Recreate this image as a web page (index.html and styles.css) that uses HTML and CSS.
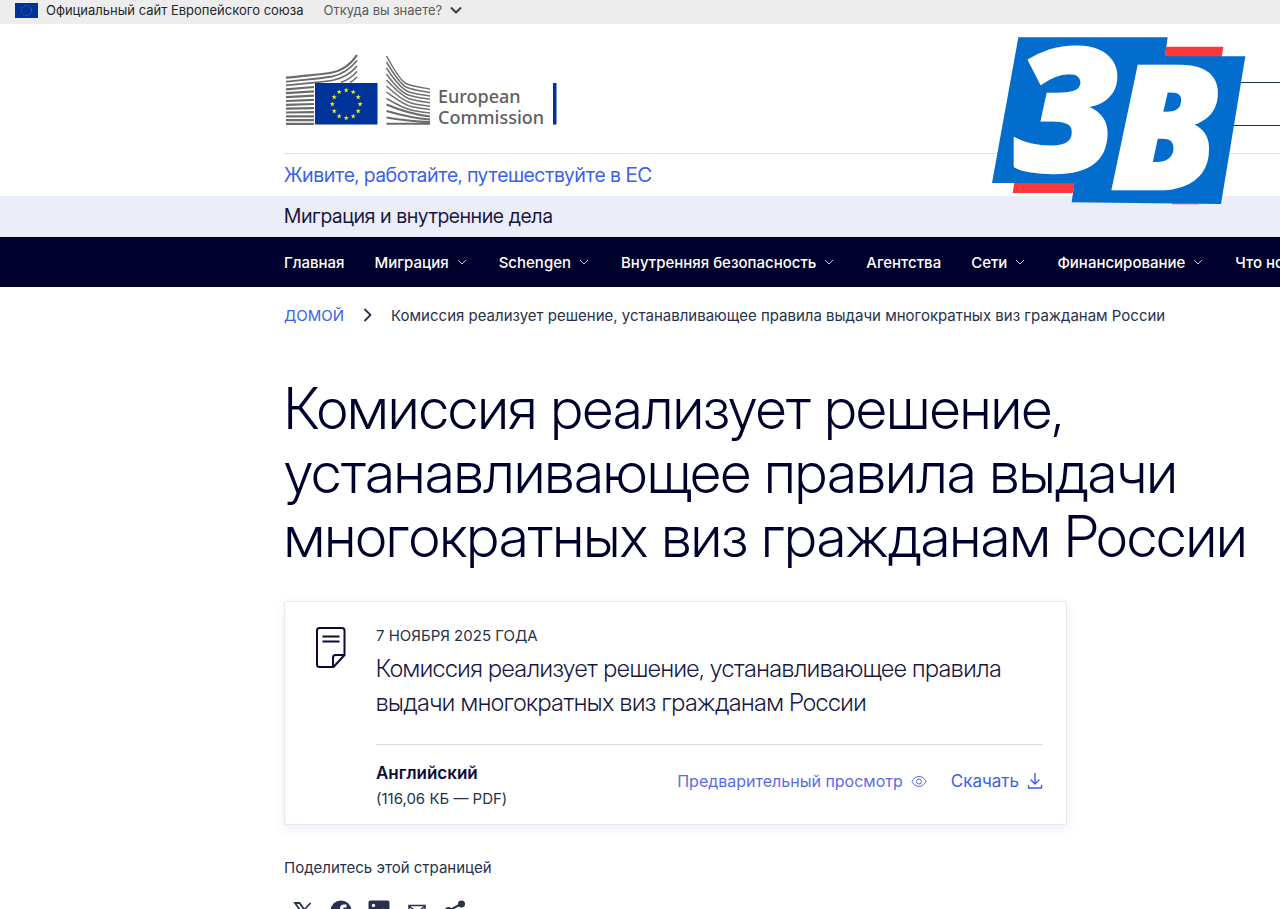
FILE: index.html
```html
<!DOCTYPE html>
<html lang="ru">
<head>
    <meta charset="UTF-8">
    <meta name="viewport" content="width=device-width, initial-scale=1">
    <title>Комиссия реализует решение</title>
    <link rel="stylesheet" href="styles.css">
</head>
<body>
    <div class="globan">
        <svg class="globan-flag" viewBox="0 0 23 15" aria-hidden="true">
            <rect width="23" height="15" fill="#039"/>
            <circle cx="11.5" cy="7.5" r="5" fill="none" stroke="#7d8a5c" stroke-width="1" stroke-dasharray="1 1.6"/>
        </svg>
        <span>Официальный сайт Европейского союза</span>
        <button class="globan-more" type="button">Откуда вы знаете?
            <svg width="12" height="8" viewBox="0 0 12 8" aria-hidden="true"><path d="M1 1.500l5 5 5-5" fill="none" stroke="#404040" stroke-width="2"/></svg>
        </button>
    </div>

    <header>
        <div class="inner">
            <div class="head">
                <a class="logo" href="#" aria-label="European Commission">
                    <svg width="274" height="72" viewBox="-1 0 274 72">
                        <g fill="none" stroke="#6b6b6b" stroke-width="2.200">
                            <path d="M1 23.700C20 21.500 32 21 45 19 58 17 66 10 72 1"/>
                            <path d="M1 27.600C20 25.500 32 25 47 22.500 59 20 66 14 72 6.500" stroke-width="1.800"/>
                            <path d="M1 31.400L29 28.600C38 27.800 43 27.300 49 26 60 23.500 67 18 72 12" stroke-width="1.700"/>
                            <path d="M56 28.500C63 26 68 22 72 17.500" stroke-width="1.500"/>
                            <path d="M65 28.500C68 27 70 25 72 23" stroke-width="1.400"/>
                            <path d="M1 35.300l28-2.300M1 39.200l28-1.800M1 43.100l28-1.500M1 47l28-1.200M1 50.800l28-.8M1 54.700l28-.5M1 58.500l28-.3M1 62.300h28M1 66.100h28M1 69.900h28"/>
                        </g>
                        <g fill="none" stroke="#707070" stroke-width="1.500">
                            <path d="M101.500 2C108 14 116 27 121 29.500S136 33.500 145 35"/>
                            <path d="M101.500 8C108 19 116 31 122 33.500S136 37 145 38.500"/>
                            <path d="M101.500 14C108 24 117 35 123 37.500S136 40.500 145 42"/>
                            <path d="M101.500 20C108 29 117 39 124 41.200S137 44 145 45.300"/>
                            <path d="M101.500 26C109 34 118 43 125 45S138 48 145 48.800"/>
                            <path d="M101.500 32C109 39 119 47 126 49S138 51.500 145 52.200"/>
                            <path d="M101.500 38C110 44 119 51 127 52.800S139 55 145 55.600"/>
                            <path d="M101.500 44.500C110 49.500 120 55 128 56.500S140 58.500 145 59"/>
                        </g>
                        <g fill="none" stroke="#6b6b6b" stroke-width="2">
                            <path d="M101.500 50.500C112 55 124 60 145 62.500M101.500 57C112 60 126 64 145 65.500M101.500 63.500C113 65.500 128 67.500 145 68M101.500 69.800H145"/>
                        </g>
                        <rect x="30" y="29" width="62.500" height="41.500" fill="#039"/>
                        <defs>
                            <path id="star" fill="#ffec00" d="M0-2.700L.7-.9 2.600-.9 1 .3 1.600 2.200 0 1-1.600 2.200-1 .3-2.600-.9-.7-.9z"/>
                        </defs>
                        <use href="#star" x="61.200" y="36.300"/>
                        <use href="#star" x="68.200" y="38.100"/>
                        <use href="#star" x="73.200" y="43.200"/>
                        <use href="#star" x="75.100" y="50.200"/>
                        <use href="#star" x="73.200" y="57.200"/>
                        <use href="#star" x="68.200" y="62.300"/>
                        <use href="#star" x="61.200" y="64.100"/>
                        <use href="#star" x="54.200" y="62.300"/>
                        <use href="#star" x="49.200" y="57.200"/>
                        <use href="#star" x="47.300" y="50.200"/>
                        <use href="#star" x="49.200" y="43.200"/>
                        <use href="#star" x="54.200" y="38.100"/>
                        <text class="logo-text" x="153" y="49">European</text>
                        <text class="logo-text" x="153" y="70">Commission</text>
                        <rect x="268" y="29" width="3.500" height="41.500" fill="#039"/>
                    </svg>
                </a>
                <form class="search">
                    <input type="search" aria-label="Поиск">
                </form>
            </div>
            <a class="slogan" href="#">Живите, работайте, путешествуйте в ЕС</a>
        </div>
        <div class="site-name">Миграция и внутренние дела</div>
        <nav class="menu">
            <a href="#">Главная</a>
            <a href="#">Миграция <svg class="arrow" viewBox="0 0 10 6"><path d="M1 1l4 4 4-4"/></svg></a>
            <a href="#">Schengen <svg class="arrow" viewBox="0 0 10 6"><path d="M1 1l4 4 4-4"/></svg></a>
            <a href="#">Внутренняя безопасность <svg class="arrow" viewBox="0 0 10 6"><path d="M1 1l4 4 4-4"/></svg></a>
            <a href="#">Агентства</a>
            <a href="#">Сети <svg class="arrow" viewBox="0 0 10 6"><path d="M1 1l4 4 4-4"/></svg></a>
            <a href="#">Финансирование <svg class="arrow" viewBox="0 0 10 6"><path d="M1 1l4 4 4-4"/></svg></a>
            <a href="#">Что нового</a>
        </nav>
    </header>

    <!-- channel badge over the header -->
    <svg class="badge" viewBox="37 35 762 504" role="img" aria-label="ЗВ">
        <path fill="#fe373b" d="M560 64H731L726 96H555zM104 470H286L279 503H99z"/>
        <path fill="#026dcd" d="M116 36H564L556 93H797L724 536 276 531 284 474 37 473z"/>
        <path fill="#e5305a" d="M575 534h75l10 3h-80z"/>
        <text class="badge-text" x="100" y="436">З</text>
        <text class="badge-text" x="392" y="490">В</text>
    </svg>

    <main class="inner">
        <nav class="crumbs">
            <a href="#">ДОМОЙ</a>
            <svg width="9" height="14" viewBox="0 0 9 14" aria-hidden="true"><path d="M1.500 1l6 6-6 6" fill="none" stroke="#26324b" stroke-width="1.800"/></svg>
            <span>Комиссия реализует решение, устанавливающее правила выдачи многократных виз гражданам России</span>
        </nav>

        <h1>Комиссия реализует решение, устанавливающее правила выдачи многократных виз гражданам России</h1>

        <article class="file">
            <svg class="file-icon" viewBox="0 0 30 41" aria-hidden="true">
                <path d="M3.500 1h22.500q2.500 0 2.500 2.500v24.500L17.500 40h-14Q1 40 1 37.500v-34Q1 1 3.500 1zM28.500 28h-9q-2.500 0-2.500 2.500V40" fill="none" stroke="#0b0b3b" stroke-width="2"/>
                <path d="M6.500 9.500h17M6.500 14.500h17" stroke="#0b0b3b" stroke-width="2"/>
            </svg>
            <div class="file-body">
                <div class="date">7 НОЯБРЯ 2025 ГОДА</div>
                <h2>Комиссия реализует решение, устанавливающее правила выдачи многократных виз гражданам России</h2>
                <div class="file-foot">
                    <div>
                        <div class="lang">Английский</div>
                        <div class="size">(116,06 КБ — PDF)</div>
                    </div>
                    <div class="actions">
                        <a class="preview" href="#">Предварительный просмотр
                            <svg width="16" height="16" viewBox="0 0 16 16" aria-hidden="true"><path d="M1 8.500C4 1.800 12 1.800 15 8.500 12 15 4 15 1 8.500z" fill="none" stroke="currentColor"/><circle cx="8" cy="8.500" r="2.500" fill="none" stroke="currentColor"/></svg>
                        </a>
                        <a class="download" href="#">Скачать
                            <svg width="16" height="16" viewBox="0 0 16 16" aria-hidden="true"><path d="M8 0v11M3.500 6.500L8 11l4.500-4.500M1.500 12v3h13v-3" fill="none" stroke="currentColor" stroke-width="1.400"/></svg>
                        </a>
                    </div>
                </div>
            </div>
        </article>

        <div class="share">
            <div>Поделитесь этой страницей</div>
            <div class="share-list">
                <a href="#" aria-label="X"><svg viewBox="0 0 22 22"><path d="M3 3h4.500l11.500 16h-4.500zM18.500 3L12 10M10 12.500L3.500 19" fill="none" stroke="#26324b" stroke-width="1.800"/></svg></a>
                <a href="#" aria-label="Facebook"><svg viewBox="0 0 22 22"><circle cx="11" cy="11" r="10.500" fill="#26324b"/><path d="M10 22v-8H7v-3.500h3V8.500q0-4 4-4h2.500v3h-2q-1.500 0-1.500 1.500v1.500h3.200L15.700 14H13v8z" fill="#fff"/></svg></a>
                <a href="#" aria-label="LinkedIn"><svg viewBox="0 0 22 22"><rect x=".5" y=".5" width="21" height="21" rx="2" fill="#26324b"/><path d="M4 9h3v9H4zM9 9h3v1.300q1-1.600 3-1.600 3 0 3 4V18h-3v-4.500q0-2-1.500-2T12 13.500V18H9z" fill="#fff"/><circle cx="5.500" cy="5.500" r="1.700" fill="#fff"/></svg></a>
                <a href="#" aria-label="Email"><svg viewBox="0 0 22 22"><path d="M3 5.500h16v12H3zM3 6l8 6.500L19 6" fill="none" stroke="#26324b" stroke-width="1.500"/></svg></a>
                <a href="#" aria-label="Share"><svg viewBox="0 0 22 22"><path d="M17 4L5 10.500 17 18" fill="none" stroke="#26324b" stroke-width="2"/><g fill="#26324b"><circle cx="17.500" cy="4" r="3.500"/><circle cx="4.500" cy="10.500" r="3.500"/><circle cx="17.500" cy="18" r="3.500"/></g></svg></a>
            </div>
        </div>
    </main>
</body>
</html>
```
FILE: styles.css
```css
*{
    box-sizing: border-box;
}
body{
    position: relative;
    margin: 0;
    font-family: Inter, "Liberation Sans", sans-serif;
    font-size: 15px;
    color: #26324b;
    background-color: #fff;
    overflow-x: hidden;
}
a{
    color: #3860ed;
    text-decoration: none;
}
.inner,
.site-name,
.menu{
    padding-left: 284px;
}
.globan{
    display: flex;
    align-items: center;
    height: 24px;
    padding: 0 15px 4px;
    font-size: 13px;
    color: #262626;
    background-color: #ededed;
}
.globan-flag{
    width: 23px;
    height: 15px;
    margin-right: 8px;
}
.globan-more{
    display: flex;
    align-items: center;
    gap: 8px;
    margin-left: 20px;
    padding: 0;
    border: 0;
    background: none;
    font: inherit;
    color: #595959;
}
.head{
    display: flex;
    justify-content: space-between;
    align-items: flex-end;
    height: 130px;
    padding-bottom: 27px;
    border-bottom: 1px solid #dcdfe4;
}
.logo svg{
    display: block;
}
.logo-text{
    font-family: "Noto Sans", sans-serif;
    font-size: 18px;
    font-weight: 500;
    fill: #606060;
}
.search{
    margin-right: -240px;
}
.search input{
    display: block;
    width: 300px;
    height: 44px;
    border: 1px solid #26324b;
    background-color: #fff;
}
.slogan,
.site-name,
h1,
h2{
    font-family: "Inter Display", Inter, sans-serif;
}
.slogan{
    display: block;
    font-size: 20px;
    line-height: 42px;
}
.site-name{
    font-size: 20px;
    line-height: 41px;
    color: #17173f;
    background-color: #ebedf9;
}
.menu{
    display: flex;
    align-items: center;
    gap: 30px;
    height: 50px;
    overflow: hidden;
    white-space: nowrap;
    background-color: #00002d;
}
.menu a{
    display: flex;
    align-items: center;
    gap: 8px;
    color: #fff;
    font-weight: 500;
}
.arrow{
    width: 10px;
    height: 6px;
    margin-right: 2px;
    fill: none;
    stroke: #c3c6d8;
}
.badge{
    position: absolute;
    top: 37px;
    right: 34px;
    width: 254px;
    height: 168px;
}
.badge-text{
    font-family: "Open Sans", "Noto Sans", sans-serif;
    font-size: 514px;
    font-weight: 800;
    font-style: italic;
    fill: #fff;
    stroke: #fff;
    stroke-width: 8px;
}
.crumbs{
    display: flex;
    align-items: center;
    gap: 19px;
    height: 56px;
    white-space: nowrap;
}
h1{
    margin: 34px 0 32px;
    font-size: 57px;
    font-weight: 300;
    line-height: 64px;
    color: #00002d;
}
.file{
    display: flex;
    gap: 30px;
    max-width: 783px;
    padding: 24px 23px 13px 31px;
    border: 1px solid #e6e8ec;
    border-radius: 2px;
    box-shadow: 0 4px 12px rgba(9, 49, 142, .08);
}
.file-icon{
    flex: none;
    width: 30px;
    height: 41px;
    margin-top: 1px;
}
.file-body{
    flex: 1;
}
.date{
    line-height: 20px;
}
h2{
    margin: 6px 0 24px;
    font-size: 24px;
    font-weight: 300;
    line-height: 34px;
    color: #17173f;
}
.file-foot{
    display: flex;
    justify-content: space-between;
    padding: 16px 0 0;
    border-top: 1px solid #d8dce4;
}
.lang{
    font-size: 17px;
    font-weight: 600;
    line-height: 25px;
    color: #0b0b3b;
}
.size{
    line-height: 25px;
}
.actions{
    display: flex;
    align-items: center;
    gap: 24px;
    height: 40px;
    font-size: 17px;
}
.actions a{
    display: flex;
    align-items: center;
    gap: 8px;
}
.actions .preview{
    font-size: 16px;
    color: #5b6bea;
}
.share{
    padding: 33px 0;
    line-height: 20px;
}
.share-list{
    display: flex;
    gap: 16px;
    padding: 22px 8px 0;
}
.share-list svg{
    display: block;
    width: 22px;
    height: 22px;
}
```
